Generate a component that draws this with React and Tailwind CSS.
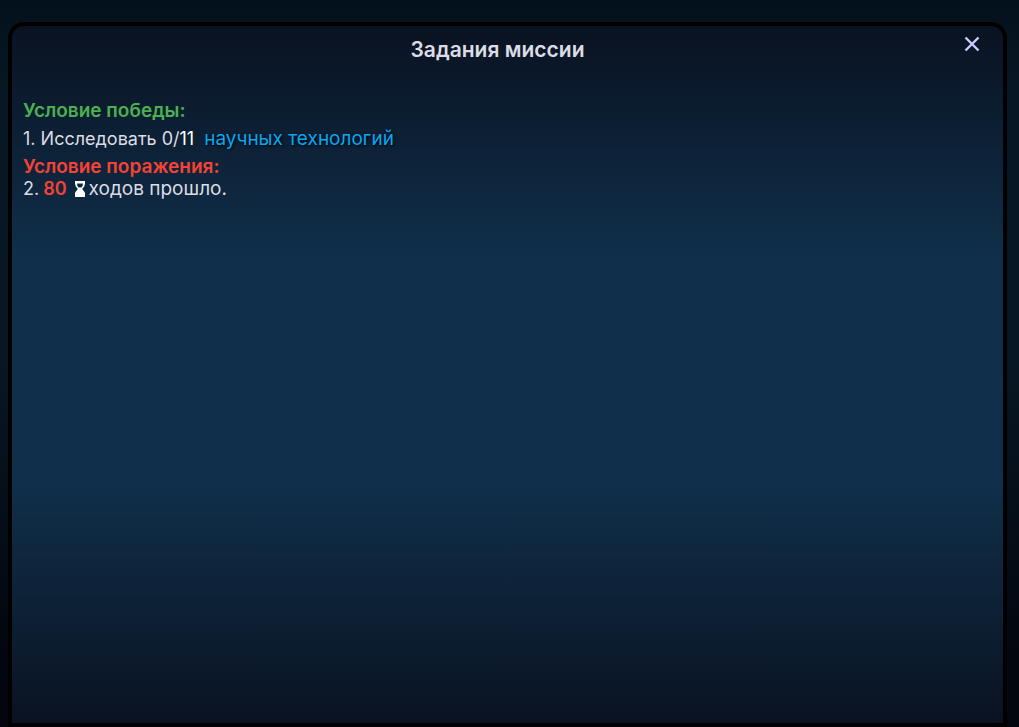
import React from "react";

function CloseIcon() {
  return (
    <svg viewBox="0 0 16 16" className="h-4 w-4" fill="none" stroke="#ccccff" strokeWidth="2.4" aria-hidden="true">
      <path d="M1.5 1.5 14.5 14.5M14.5 1.5 1.5 14.5" />
    </svg>
  );
}

function HourglassIcon() {
  return (
    <svg viewBox="0 0 10 16" className="mr-1 h-4 w-[10px] shrink-0" aria-hidden="true">
      <path
        fill="#ffffff"
        fillRule="evenodd"
        d="M0 0H10V3.5H9.5V5L7.2 8L9.5 11V11.5H10V16H0V11.5H.5V11L2.8 8L.5 5V3.5H0ZM2.2 2.5V4.6L3.6 6.5H6.4L7.8 4.6V2.5Z"
      />
    </svg>
  );
}

export default function App() {
  return (
    <div className="flex min-h-screen flex-col bg-[linear-gradient(180deg,#04111c_0%,#071723_12%,#071723_50%,#03060e_90%)] pt-[22px] pr-3 pl-2 font-[Inter,'Noto_Sans',sans-serif] text-[#dcdce4]">
      <section
        aria-labelledby="mission-title"
        className="flex-1 rounded-t-2xl border-4 border-black bg-[linear-gradient(180deg,#0a1221_0%,#102f4a_33%,#102f4a_66%,#0a1221_100%)] px-[11px]"
      >
        <header className="flex h-12 items-start">
          <h1 id="mission-title" className="flex-1 pt-2.5 pl-4 text-center text-[21px] leading-7 font-semibold">
            Задания миссии
          </h1>
          <button type="button" aria-label="Закрыть" className="mt-1 mr-1 flex h-7 w-8 cursor-pointer items-center justify-center">
            <CloseIcon />
          </button>
        </header>
        <div className="pt-[26px] text-[19px] leading-[22px]">
          <h2 className="font-semibold text-[#4caf50]">Условие победы:</h2>
          <p className="my-1.5 flex flex-wrap items-baseline">
            <span className="text-lg leading-[22px]">
              1. Исследовать 0/<span className="text-white">11</span>
            </span>
            <a href="#technologies" className="ml-2.5 text-[#03a9f4] [text-shadow:1px_1px_3px_#000000]">
              научных технологий
            </a>
          </p>
          <h2 className="font-semibold text-[#f44336]">Условие поражения:</h2>
          <p className="flex items-center">
            <span className="mr-1 text-lg leading-[22px]">2.</span>
            <b className="mr-2 text-lg leading-[22px] font-semibold text-[#f44336]">80</b>
            <HourglassIcon />
            <span>ходов прошло.</span>
          </p>
        </div>
      </section>
    </div>
  );
}
